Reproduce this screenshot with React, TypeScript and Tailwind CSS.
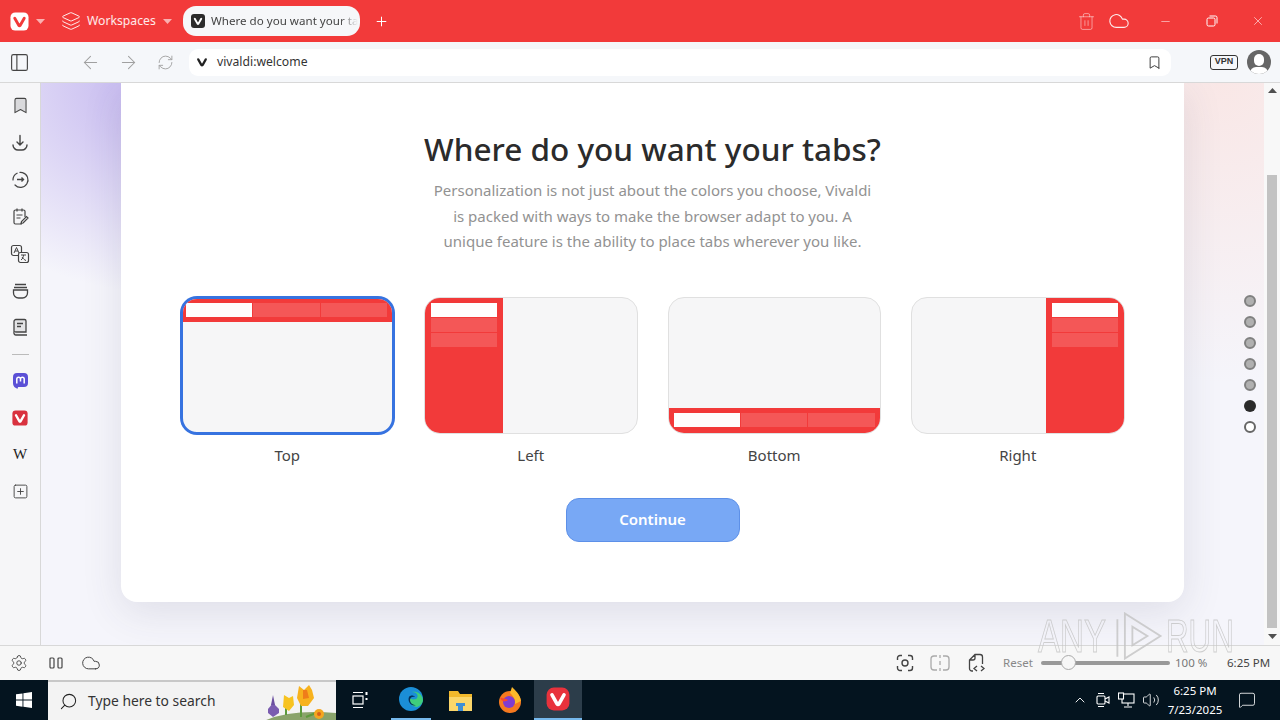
import React from 'react';
import {
  ChevronUp, Layers, Plus, Minus, X, Trash2, Cloud, ArrowLeft, ArrowRight, RefreshCw, Bookmark,
  PanelLeft, Settings, Search, Volume2, MessageSquare, SquarePlus,
} from 'lucide-react';

const RED = 'bg-[#f23a3a]';

const VivaldiV = ({className = '', stroke = '#fff'}: {className?: string; stroke?: string}) => (
  <svg viewBox="0 0 20 20" className={className} fill="none">
    <path d="M4.6 6.2 L9.2 14.4 Q10 15.4 10.8 14.4 L15.4 6.2" stroke={stroke} strokeWidth="3.2" strokeLinecap="round" strokeLinejoin="round"/>
  </svg>
);

const VivaldiLogo = ({size = 18, bg = '#fff', fg = '#f23a3a', radius = 5}: any) => (
  <svg width={size} height={size} viewBox="0 0 20 20" fill="none">
    <rect x="0.5" y="0.5" width="19" height="19" rx={radius} fill={bg}/>
    <path d="M5 6.6 L9.2 14 Q10 15 10.8 14 L15 6.6" stroke={fg} strokeWidth="3" strokeLinecap="round" strokeLinejoin="round"/>
  </svg>
);

const Caret = ({className = ''}: {className?: string}) => (
  <svg width="9" height="5" viewBox="0 0 9 5" className={className}><path d="M0 0h9L4.5 5z" fill="currentColor"/></svg>
);

const TabBar = () => (
  <div className={`h-[42px] ${RED} flex items-center text-white shrink-0`}>
    <div className="w-[29px] flex justify-end"><VivaldiLogo size={19}/></div>
    <Caret className="ml-[7px] text-white/60"/>
    <Layers size={20} strokeWidth={1.2} className="ml-[16px] text-white/90"/>
    <span className="ml-[6px] text-[12.2px] text-white/90 font-['Noto_Sans',sans-serif] w-[76px]">Workspaces</span>
    <Caret className="text-white/60"/>
    <div className="ml-[11px] w-[177px] h-[30px] rounded-[13px] bg-[#f6f7f9] flex items-center pl-[8px] overflow-hidden">
      <span className="w-[14px] h-[14px] rounded-[3px] bg-[#2b2b2b] flex items-center justify-center shrink-0">
        <VivaldiV className="w-[12px] h-[12px]"/>
      </span>
      <span className="ml-[6px] text-[11.6px] text-[#444] whitespace-nowrap font-['Noto_Sans',sans-serif] overflow-hidden w-[147px] [mask-image:linear-gradient(to_right,#000_88%,transparent)]">Where do you want your tabs?</span>
    </div>
    <Plus size={15} strokeWidth={1.6} className="ml-[14px]"/>
    <div className="flex-1"/>
    <Trash2 size={19} strokeWidth={1.2} className="text-white/50 mr-[12px]"/>
    <Cloud size={22} strokeWidth={1.2} className="text-white/90"/>
    <div className="w-[150px] flex items-center justify-between pl-[29px] pr-[15px]">
      <Minus size={13} strokeWidth={1}/>
      <svg width="12" height="12" viewBox="0 0 12 12" fill="none" stroke="#fff" strokeWidth="1">
        <rect x="1" y="3" width="8" height="8" rx="1.5"/>
        <path d="M3.5 1h6a1.5 1.5 0 0 1 1.5 1.5v6"/>
      </svg>
      <X size={14} strokeWidth={1}/>
    </div>
  </div>
);

const AddressBar = () => (
  <div className="h-[41px] bg-[#f5f7fa] border-b border-[#d8d8d8] flex items-center shrink-0">
    <PanelLeft size={21} strokeWidth={1.3} className="ml-[9px] text-[#444]"/>
    <ArrowLeft size={21} strokeWidth={1.2} className="ml-[50px] text-[#a0a0a0]"/>
    <ArrowRight size={21} strokeWidth={1.2} className="ml-[17px] text-[#a0a0a0]"/>
    <RefreshCw size={17} strokeWidth={1.3} className="ml-[18px] text-[#a0a0a0]"/>
    <div className="ml-[15px] w-[982px] h-[27px] bg-white rounded-[9px] flex items-center pl-[6px] pr-[9px]">
      <VivaldiV className="w-[14px] h-[14px]" stroke="#222"/>
      <span className="ml-[8px] text-[12.2px] text-[#333] font-['Noto_Sans',sans-serif]">vivaldi:welcome</span>
      <div className="flex-1"/>
      <Bookmark size={15} strokeWidth={1.5} className="text-[#333]"/>
    </div>
    <span className="ml-[39px] w-[28px] h-[15px] rounded-[3px] border-[1.5px] border-[#333] text-[9px] font-bold text-[#333] flex items-center justify-center font-['Liberation_Sans',sans-serif]">VPN</span>
    <div className="ml-[9px] w-[24px] h-[24px] rounded-full bg-[#666] overflow-hidden relative">
      <div className="absolute left-[7px] top-[4px] w-[10px] h-[12px] rounded-full bg-white"/>
      <div className="absolute left-[3px] top-[17px] w-[18px] h-[12px] rounded-full bg-white"/>
    </div>
  </div>
);

const SideIcon = ({children}: {children: React.ReactNode}) => (
  <div className="h-[37px] flex items-center justify-center text-[#444]">{children}</div>
);

const Sidebar = () => (
  <div className="w-[41px] bg-[#f6f6f8] border-r border-[#d8d8d8] pt-[4px] shrink-0 flex flex-col">
    <SideIcon><Bookmark size={19} strokeWidth={1.3} fill="#d9d9dc"/></SideIcon>
    <SideIcon>
      <svg width="18" height="18" viewBox="0 0 18 18" fill="none" stroke="#444" strokeWidth="1.4" strokeLinecap="round">
        <path d="M9 1.500v9M6 8l3 3 3-3"/><path d="M2 11c0 3 2.500 5 5 5h4c2.500 0 5-2 5-5"/>
      </svg>
    </SideIcon>
    <SideIcon>
      <svg width="19" height="19" viewBox="0 0 19 19" fill="none" stroke="#444" strokeWidth="1.2">
        <path d="M4 15a7.500 7.500 0 1 0-2-5" strokeLinecap="round" strokeDasharray="30 3"/>
        <path d="M6 9.500h6.500M10.500 7.500l2 2-2 2" strokeWidth="1.400"/>
      </svg>
    </SideIcon>
    <SideIcon>
      <svg width="19" height="19" viewBox="0 0 19 19" fill="none" stroke="#444" strokeWidth="1.2">
        <path d="M11 17H4.500A1.500 1.500 0 0 1 3 15.500v-11A1.500 1.500 0 0 1 4.500 3h8A1.500 1.500 0 0 1 14 4.500V10"/>
        <path d="M6 1.500v3M11 1.500v3M5.500 8h6M5.500 11h4M12 16l5-5-1.500-1.500-5 5-.5 2z"/>
      </svg>
    </SideIcon>
    <SideIcon>
      <svg width="20" height="20" viewBox="0 0 20 20" fill="none" stroke="#444" strokeWidth="1.2">
        <rect x="1.500" y="1.500" width="10" height="10" rx="2"/>
        <rect x="8.500" y="8.500" width="10" height="10" rx="2" fill="#f6f6f8"/>
        <path d="M4 9l2.500-5.500L9 9M5 7h3M11 11h5M13.500 11c0 2-1 4-2.500 5M12 13c1 1.500 2.500 3 4 3.500" strokeWidth="1"/>
      </svg>
    </SideIcon>
    <SideIcon>
      <svg width="19" height="19" viewBox="0 0 19 19" fill="none" stroke="#444" strokeWidth="1.3">
        <path d="M4 3.500h11M3 6.500h13M2.500 9h14v3a5 5 0 0 1-5 5h-4a5 5 0 0 1-5-5z"/>
      </svg>
    </SideIcon>
    <SideIcon>
      <svg width="18" height="19" viewBox="0 0 18 19" fill="#e4e4e6" stroke="#444" strokeWidth="1.300">
        <path d="M3 14V3.500A2 2 0 0 1 5 1.500h8.500A1.500 1.500 0 0 1 15 3v11z"/>
        <path d="M3 14.500A2 2 0 0 0 5 17h11M6 5.500h6M6 8.500h4"/>
      </svg>
    </SideIcon>
    <div className="h-[16px] flex items-center justify-center"><div className="w-[17px] h-px bg-[#bbb]"/></div>
    <SideIcon>
      <svg width="15" height="16" viewBox="0 0 15 16">
        <path d="M4 0h7a4 4 0 0 1 4 4v6a4 4 0 0 1-4 4H6c-.8 0-1.500.2-1 1.500C2 15.500 0 13 0 10V4a4 4 0 0 1 4-4z" fill="#5b50d6"/>
        <path d="M3.800 10.500V6a1.800 1.800 0 0 1 3.700 0v2.500M7.500 8.500V6a1.800 1.800 0 0 1 3.700 0v4.500" stroke="#fff" strokeWidth="1.500" fill="none"/>
      </svg>
    </SideIcon>
    <SideIcon><VivaldiLogo size={16} bg="#d9323f" fg="#fff" radius={4}/></SideIcon>
    <SideIcon><span className="text-[15px] text-[#222] font-['Liberation_Serif',serif]">W</span></SideIcon>
    <SideIcon><SquarePlus size={17} strokeWidth={1.3}/></SideIcon>
  </div>
);

const Tab = ({active = false, className = ''}: {active?: boolean; className?: string}) => (
  <div className={`${active ? 'bg-white' : 'bg-white/15'} ${className}`}/>
);

const TopStrip = ({className = ''}: {className?: string}) => (
  <div className={`${RED} shrink-0 flex items-center gap-[1px] ${className}`}>
    <Tab active className="w-[66px] h-[14px]"/>
    <Tab className="flex-1 h-[14px]"/>
    <Tab className="flex-1 h-[14px]"/>
  </div>
);

const SideStrip = () => (
  <div className={`${RED} w-[78px] h-full shrink-0 flex flex-col gap-[1px] pt-[5.500px] px-[6px]`}>
    <Tab active className="h-[14px]"/>
    <Tab className="h-[14px]"/>
    <Tab className="h-[14px]"/>
  </div>
);

const Option = ({label, selected = false, children, row = false}: any) => (
  <div className="flex flex-col items-center">
    <div className={`w-full h-[137px] rounded-[16px] bg-[#f6f6f7] overflow-hidden flex ${row ? 'flex-row' : 'flex-col'} ${selected ? 'border-2 border-[#3773e0] ring-1 ring-[#3773e0]' : 'border border-[#e0e0e0]'}`}>
      {children}
    </div>
    <span className="mt-[10px] text-[15px] leading-[22px] text-[#444]">{label}</span>
  </div>
);

const Page = () => (
  <div className="flex-1 relative overflow-hidden bg-[#f5f5fb] bg-[radial-gradient(ellipse_250px_210px_at_120px_0px,#c2b4ef,transparent),radial-gradient(ellipse_320px_300px_at_1180px_0px,#f9e7e6,transparent)]">
    <div className="mx-[80px] h-[519px] bg-white rounded-b-[16px] shadow-[0_10px_40px_rgba(60,60,90,0.12)] px-[59.500px] pt-[44px] font-['Noto_Sans',sans-serif]">
      <h1 className="text-[31.500px] leading-[44px] font-medium text-[#2b2b2b] text-center">Where do you want your tabs?</h1>
      <p className="mt-[7px] text-[15px] leading-[25.500px] text-[#929292] text-center w-[445px] mx-auto">
        Personalization is not just about the colors you choose, Vivaldi is packed with ways to make the browser adapt to you. A unique feature is the ability to place tabs wherever you like.
      </p>
      <div className="mt-[42px] grid grid-cols-4 gap-[30px]">
        <Option label="Top" selected><TopStrip className="h-[23px] pl-[3.500px] pr-[5px]"/></Option>
        <Option label="Left" row><SideStrip/></Option>
        <Option label="Bottom"><div className="flex-1"/><TopStrip className="h-[25px] px-[5px]"/></Option>
        <Option label="Right" row><div className="flex-1"/><SideStrip/></Option>
      </div>
      <button className="block mx-auto mt-[32px] w-[174px] h-[44px] rounded-[13px] bg-[#78a8f5] border border-[#5d90e8] text-white text-[15px] font-semibold">Continue</button>
    </div>
    <div className="absolute right-[8px] top-[212px] flex flex-col gap-[9px]">
      {[0, 1, 2, 3, 4].map(i => <span key={i} className="block w-[12px] h-[12px] rounded-full bg-[#b0b0b0] border-2 border-[#808080]"/>)}
      <span className="block w-[12px] h-[12px] rounded-full bg-[#2a2a2a]"/>
      <span className="block w-[12px] h-[12px] rounded-full bg-white border-2 border-[#666]"/>
    </div>
  </div>
);

const Scrollbar = () => (
  <div className="w-[16px] bg-[#f8f8f8] flex flex-col items-center shrink-0">
    <svg width="9" height="5" viewBox="0 0 9 5" className="mt-[5px]"><path d="M0 5h9L4.500 0z" fill="#505050"/></svg>
    <div className="w-[10px] h-[453px] bg-[#c2c2c2] mt-[82px]"/>
    <svg width="9" height="5" viewBox="0 0 9 5" className="mt-[6px]"><path d="M0 0h9L4.500 5z" fill="#505050"/></svg>
  </div>
);

const StatusBar = () => (
  <div className="h-[35px] bg-[#f7f7f7] border-t border-[#d8d8d8] flex items-center shrink-0 text-[#444] font-['Noto_Sans',sans-serif] relative">
    <Settings size={18} strokeWidth={1.2} className="ml-[10px]"/>
    <svg width="14" height="12" viewBox="0 0 14 12" fill="none" stroke="#444" strokeWidth="1.2" className="ml-[21px]">
      <rect x="1" y="1" width="4" height="10" rx="1"/><rect x="9" y="1" width="4" height="10" rx="1"/>
    </svg>
    <Cloud size={20} strokeWidth={1.2} className="ml-[18px]"/>
    <div className="flex-1"/>
    <svg width="18" height="18" viewBox="0 0 18 18" fill="none" stroke="#444" strokeWidth="1.400" className="mr-[16px]">
      <circle cx="9" cy="9" r="3"/><path d="M1.500 6V4a2.500 2.500 0 0 1 2.500-2.500h2M12 1.500h2A2.500 2.500 0 0 1 16.500 4v2M16.500 12v2a2.500 2.500 0 0 1-2.500 2.500h-2M6 16.500H4A2.500 2.500 0 0 1 1.500 14v-2"/>
    </svg>
    <svg width="20" height="18" viewBox="0 0 20 18" fill="none" stroke="#aaa" strokeWidth="1.300" className="mr-[18px]">
      <path d="M7 2H4a3 3 0 0 0-3 3v8a3 3 0 0 0 3 3h3M13 2h3a3 3 0 0 1 3 3v8a3 3 0 0 1-3 3h-3M10 1v3M10 7v4M10 14v3"/>
    </svg>
    <svg width="18" height="20" viewBox="0 0 18 20" fill="none" stroke="#444" strokeWidth="1.300" className="mr-[17px]">
      <path d="M5 18H4a2.500 2.500 0 0 1-2.500-2.500V7L7 1.500h5A2.500 2.500 0 0 1 14.500 4v7M7 1.500V5A2 2 0 0 1 5 7H1.500M9 13l-3 2.500L9 18M13 13l3 2.500-3 2.500"/>
    </svg>
    <span className="text-[11.500px] text-[#888] w-[38px]">Reset</span>
    <div className="w-[129px] h-[4px] bg-[#999] rounded-full relative">
      <div className="absolute left-[20px] top-[-6px] w-[15px] h-[15px] rounded-full border border-[#aaa] bg-[#f7f7f7]"/>
    </div>
    <span className="ml-[5px] w-[52px] text-[11.500px] text-[#777]">100 %</span>
    <span className="w-[53px] text-[11.500px] text-[#444] whitespace-nowrap">6:25 PM</span>
    <div className="absolute left-[1038px] bottom-[14px] flex items-center text-transparent opacity-80 pointer-events-none font-['Liberation_Sans',sans-serif] [-webkit-text-stroke:1px_#c4c4c4]">
      <span className="text-[46px] leading-[46px] w-[68px] scale-x-[0.72] origin-left">ANY</span>
      <svg width="60" height="60" viewBox="0 0 64 64" fill="none" stroke="#c4c4c4" strokeWidth="2" className="ml-[2px]">
        <path d="M10 14v40M18 8v48l38-24z"/><path d="M26 22v20l16-10z"/>
      </svg>
      <span className="text-[46px] leading-[46px] ml-[-2px] w-[62px] scale-x-[0.68] origin-left">RUN</span>
    </div>
  </div>
);

const Flowers = () => (
  <svg width="80" height="40" viewBox="0 0 80 40">
    <path d="M8 40q26-12 72-8v8z" fill="#8aa36b"/>
    <path d="M17 22l-5 6v4l5 4 6-4v-4z" fill="#7a5cb0"/><path d="M17 14l-2 10h4z" fill="#6b4fa0"/>
    <path d="M45 36V22M30 34v-8M60 32l-10 4" stroke="#5d9a3c" strokeWidth="2"/>
    <path d="M28 14l5 3 4-2 1 9-5 6-6-4z" fill="#f7c320"/>
    <path d="M43 5l5 4 5-5 3 5 2 8-6 8h-7l-4-8z" fill="#f7b21e"/><path d="M47 9l4 0 2 8-6 1z" fill="#ef7d1a"/>
    <circle cx="63" cy="33" r="5" fill="#f4a620"/><circle cx="63" cy="33" r="2" fill="#d9601a"/>
  </svg>
);

const Taskbar = () => (
  <div className="h-[40px] bg-[#04141f] flex items-center shrink-0 text-white font-['Noto_Sans',sans-serif]">
    <div className="w-[48px] flex justify-center">
      <svg width="16" height="16" viewBox="0 0 16 16" fill="#fff"><path d="M0 2.300l6.500-.9v6.200H0zM7.400 1.300L16 0v7.600H7.400zM0 8.500h6.500v6.200L0 13.800zM7.400 8.500H16V16l-8.600-1.200z"/></svg>
    </div>
    <div className="w-[288px] h-[40px] bg-[#f3f3f3] border-t-2 border-[#c8c8c8] flex items-center overflow-hidden">
      <Search size={19} strokeWidth={1.3} className="ml-[11px] text-[#222] -scale-x-100"/>
      <span className="ml-[10px] text-[13.850px] text-[#333] whitespace-nowrap">Type here to search</span>
      <div className="flex-1"/>
      <Flowers/>
    </div>
    <div className="w-[48px] flex justify-center">
      <svg width="16" height="18" viewBox="0 0 16 18" fill="none" stroke="#fff" strokeWidth="1.200"><path d="M1 1.500h10M1 16.500h10"/><rect x="1" y="5" width="10" height="8"/><path d="M14.500 1v3M14.500 7v2" strokeWidth="2"/></svg>
    </div>
    <div className="w-[40px] h-full flex items-center justify-center border-b-2 border-[#76b9ed] ml-[7px]">
      <svg width="24" height="24" viewBox="0 0 24 24">
        <circle cx="12" cy="12" r="12" fill="#1b8ed6"/>
        <path d="M24 13c-1-7-7-9-11-8 6 0 7 5 4 7-3 1-6 0-7-2-1 6 4 10 8 10 3-1 6-4 6-7z" fill="#3fce7b"/>
        <path d="M10 10c1-2 5-2 6 0-2-1-5 0-5 3s3 5 6 5c-4 2-9-3-7-8z" fill="#04315c"/>
      </svg>
    </div>
    <div className="w-[50px] flex justify-center ml-[4px]">
      <svg width="23" height="21" viewBox="0 0 23 21"><path d="M0 1h9l2 3h12v5H0z" fill="#f2b92c"/><rect y="7" width="23" height="14" fill="#fbd66a"/><rect x="7" y="13" width="9" height="3" fill="#3f8fd6"/><rect x="9" y="16" width="5" height="5" fill="#3f8fd6"/></svg>
    </div>
    <div className="w-[49px] flex justify-center">
      <svg width="24" height="26" viewBox="0 0 24 26">
        <circle cx="12" cy="15" r="11" fill="#f5791f"/>
        <path d="M14 0c3 3 8 7 9 14l-6 3c1-5-3-9-5-11z" fill="#fcb82a"/>
        <circle cx="11" cy="15" r="6" fill="#7f3cd0"/>
        <path d="M2 10c2 2 6 1 8 3-4 3-7 1-8-3z" fill="#f9452f"/>
      </svg>
    </div>
    <div className="w-[48px] h-full bg-[#2c3d4a] border-b-2 border-[#76b9ed] flex items-center justify-center">
      <VivaldiLogo size={24} bg="#e8323c" fg="#fff" radius={6}/>
    </div>
    <div className="flex-1"/>
    <ChevronUp size={16} strokeWidth={1.4} className="mr-[8px]"/>
    <svg width="14" height="18" viewBox="0 0 14 18" fill="none" stroke="#fff" strokeWidth="1.100" className="mr-[8px]"><rect x="1" y="5" width="8" height="8" rx="1"/><path d="M9 8l4-2v6l-4-2M2 2.500h6M2 15.500h6"/></svg>
    <svg width="17" height="17" viewBox="0 0 17 17" fill="none" stroke="#fff" strokeWidth="1.100" className="mr-[7px]"><rect x="4" y="2" width="12" height="9"/><rect x="0.500" y="1" width="5" height="6" fill="#04141f"/><path d="M10 11v3M6 15h8"/></svg>
    <Volume2 size={18} strokeWidth={1.100}/>
    <div className="w-[70px] flex flex-col items-center text-[11.500px] leading-[19px] whitespace-nowrap">
      <span>6:25 PM</span>
      <span>7/23/2025</span>
    </div>
    <MessageSquare size={18} strokeWidth={1.100} className="ml-[8px] mr-[24px]"/>
  </div>
);

const App = () => (
  <div className="w-[1280px] h-[720px] flex flex-col overflow-hidden bg-white">
    <TabBar/>
    <AddressBar/>
    <div className="flex-1 flex min-h-0">
      <Sidebar/>
      <Page/>
      <Scrollbar/>
    </div>
    <StatusBar/>
    <Taskbar/>
  </div>
);

export default App;
